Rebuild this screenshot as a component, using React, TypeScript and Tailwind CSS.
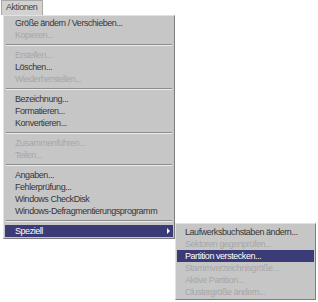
type Item = { label: string; disabled?: boolean; active?: boolean; sub?: boolean } | "sep";

const mainItems: Item[] = [
  { label: "Größe ändern / Verschieben..." },
  { label: "Kopieren...", disabled: true },
  "sep",
  { label: "Erstellen...", disabled: true },
  { label: "Löschen..." },
  { label: "Wiederherstellen...", disabled: true },
  "sep",
  { label: "Bezeichnung..." },
  { label: "Formatieren..." },
  { label: "Konvertieren..." },
  "sep",
  { label: "Zusammenführen...", disabled: true },
  { label: "Teilen...", disabled: true },
  "sep",
  { label: "Angaben..." },
  { label: "Fehlerprüfung..." },
  { label: "Windows CheckDisk" },
  { label: "Windows-Defragmentierungsprogramm" },
  "sep",
  { label: "Speziell", active: true, sub: true },
];

const subItems: Item[] = [
  { label: "Laufwerksbuchstaben ändern..." },
  { label: "Sektoren gegenprüfen...", disabled: true },
  { label: "Partition verstecken...", active: true },
  { label: "Stammverzeichnisgröße...", disabled: true },
  { label: "Aktive Partition...", disabled: true },
  { label: "Clustergröße ändern...", disabled: true },
];

function Row({ item, pad }: { item: Item; pad: string }) {
  if (item === "sep") {
    return (
      <div className="h-[8px] flex flex-col justify-center px-[1px]">
        <div className="h-px bg-[#8c8c8c]" />
        <div className="h-px bg-[#ececec]" />
      </div>
    );
  }
  return (
    <div
      className={`relative h-[12px] flex items-center ${pad} ${
        item.active ? "bg-[#3b3b78] text-white" : item.disabled ? "text-[#a6a6a6]" : "text-[#363636]"
      }`}
    >
      <span className="whitespace-nowrap leading-none">{item.label}</span>
      {item.sub && (
        <span className="absolute right-[3px] top-[3px] w-0 h-0 border-y-[3px] border-y-transparent border-l-[3px] border-l-white" />
      )}
    </div>
  );
}

export default function App() {
  return (
    <div
      className="relative w-[318px] h-[302px] bg-white text-[9px] tracking-[-0.45px] overflow-hidden"
      style={{ fontFamily: '"Liberation Sans", Arial, sans-serif' }}
    >
      {/* menu bar tab */}
      <div className="ml-[1px] w-[42px] h-[15px] bg-[#d2d2d2] border border-[#a8a8a8] border-b-0 flex items-center pl-[4px] text-[#444444]">
        Aktionen
      </div>

      {/* main dropdown */}
      <div className="ml-[3px] w-[172px] bg-[#c6c6c6] border border-t-[#e2e2e2] border-l-[#e2e2e2] border-r-[#7c7c7c] border-b-[#7c7c7c] py-[1px] px-[1px]">
        {mainItems.map((it, i) => (
          <Row key={i} item={it} pad="pl-[10px]" />
        ))}
      </div>

      {/* flyout submenu */}
      <div className="absolute left-[175px] top-[223px] w-[141px] bg-[#c6c6c6] border border-t-[#e2e2e2] border-l-[#e2e2e2] border-r-[#7c7c7c] border-b-[#7c7c7c] pt-[2px] pb-[1px] px-[1px]">
        {subItems.map((it, i) => (
          <Row key={i} item={it} pad="pl-[8px]" />
        ))}
      </div>
    </div>
  );
}
